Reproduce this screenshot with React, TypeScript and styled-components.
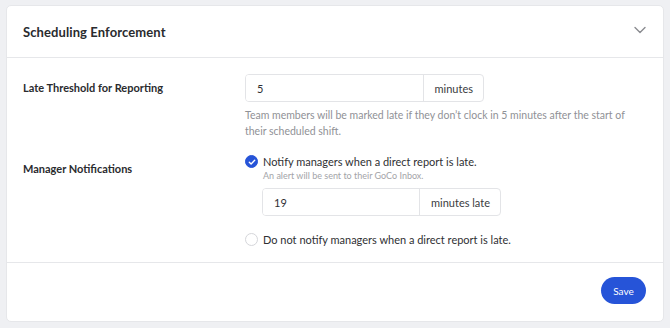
import React, { useState } from 'react';
import styled, { createGlobalStyle } from 'styled-components';

const GlobalStyle = createGlobalStyle`
  html, body {
    margin: 0;
    padding: 0;
    background: #eff0f3;
  }
  body {
    font-family: 'Lato', 'Helvetica Neue', Arial, sans-serif;
    color: #2f3033;
    -webkit-font-smoothing: antialiased;
  }
  * {
    box-sizing: border-box;
  }
`;

const Page = styled.div`
  padding: 5px 6px 6px 6px;
  width: 670px;
  height: 328px;
`;

const Card = styled.section`
  background: #fff;
  border: 1px solid #e6e7ea;
  border-radius: 5px;
  height: 317px;
  display: flex;
  flex-direction: column;
`;

const CardHeader = styled.header`
  flex: none;
  display: flex;
  align-items: center;
  justify-content: space-between;
  height: 52px;
  padding: 0 16px 0 16px;
  border-bottom: 1px solid #e6e7ea;
`;

const Title = styled.h2`
  margin: 0;
  font-size: 13px;
  font-weight: 700;
  color: #2a2b2e;
  letter-spacing: 0.1px;
`;

const Chevron = styled.svg`
  width: 14px;
  height: 14px;
  margin-top: -4px;
`;

const CardBody = styled.div`
  flex: 1;
  padding: 16px 16px 0 16px;
`;

const Row = styled.div<{ gap: number }>`
  display: grid;
  grid-template-columns: 222px 1fr;
  margin-bottom: ${(p) => p.gap}px;
`;

const Label = styled.div<{ offset: number }>`
  font-size: 11px;
  line-height: 14px;
  font-weight: 700;
  color: #2a2b2e;
  padding-top: ${(p) => p.offset}px;
`;

const Field = styled.div`
  display: flex;
  flex-direction: column;
`;

const InputGroup = styled.div<{ width: number }>`
  display: flex;
  width: ${(p) => p.width}px;
  height: 28px;
  border: 1px solid #e3e4e7;
  border-radius: 4px;
  overflow: hidden;
`;

const Input = styled.input`
  flex: 1;
  min-width: 0;
  border: none;
  outline: none;
  padding: 0 11px;
  font-family: inherit;
  font-size: 11px;
  color: #2f3033;
  background: #fff;
`;

const Addon = styled.span`
  display: flex;
  align-items: center;
  padding: 0 10px 0 11px;
  border-left: 1px solid #e3e4e7;
  font-size: 11px;
  color: #3a3b3e;
`;

const Help = styled.p`
  margin: 5px 0 0 0;
  font-size: 10.5px;
  line-height: 16px;
  color: #909196;
  max-width: 392px;
`;

const Option = styled.label`
  display: flex;
  align-items: flex-start;
  gap: 5px;
  cursor: pointer;
`;

const RadioDot = styled.span<{ checked: boolean }>`
  flex: none;
  width: 13px;
  height: 13px;
  border-radius: 50%;
  display: flex;
  align-items: center;
  justify-content: center;
  background: ${(p) => (p.checked ? '#2654d8' : '#fff')};
  border: 1px solid ${(p) => (p.checked ? '#2654d8' : '#d5d6da')};
`;

const OptionText = styled.div`
  display: flex;
  flex-direction: column;
`;

const OptionTitle = styled.span`
  font-size: 11px;
  line-height: 13px;
  color: #2f3033;
`;

const OptionSub = styled.span`
  font-size: 9px;
  line-height: 13px;
  margin-top: 1px;
  color: #a3a4a8;
`;

const Nested = styled.div`
  margin: 6px 0 0 17px;
`;

const SecondOption = styled.div`
  margin-top: 17px;
`;

const CardFooter = styled.footer`
  flex: none;
  display: flex;
  justify-content: flex-end;
  align-items: center;
  height: 59px;
  padding: 0 17px;
  border-top: 1px solid #e6e7ea;
`;

const SaveButton = styled.button`
  width: 45px;
  height: 27px;
  margin-top: -3px;
  border: none;
  border-radius: 14px;
  background: #2654d8;
  color: #fff;
  font-family: inherit;
  font-size: 10px;
  cursor: pointer;
`;

const Check: React.FC = () => (
  <svg width="8" height="8" viewBox="0 0 8 8" fill="none">
    <path d="M1.3 4.2l1.8 1.7L6.7 2.3" stroke="#fff" strokeWidth="1.4" strokeLinecap="round" strokeLinejoin="round" />
  </svg>
);

const App: React.FC = () => {
  const [notify, setNotify] = useState<boolean>(true);
  const [threshold, setThreshold] = useState<string>('5');
  const [lateMinutes, setLateMinutes] = useState<string>('19');

  const helpText = `Team members will be marked late if they don’t clock in ${threshold} minutes after the start of their scheduled shift.`;

  return (
    <>
      <GlobalStyle />
      <Page>
        <Card>
          <CardHeader>
            <Title>Scheduling Enforcement</Title>
            <Chevron viewBox="0 0 14 14" fill="none">
              <path d="M2 4.5l5 5 5-5" stroke="#8a8b90" strokeWidth="1.4" strokeLinecap="round" strokeLinejoin="round" />
            </Chevron>
          </CardHeader>

          <CardBody>
            <Row gap={16}>
              <Label offset={7}>Late Threshold for Reporting</Label>
              <Field>
                <InputGroup width={239}>
                  <Input value={threshold} onChange={(e) => setThreshold(e.target.value)} />
                  <Addon>minutes</Addon>
                </InputGroup>
                <Help>{helpText}</Help>
              </Field>
            </Row>

            <Row gap={0}>
              <Label offset={7}>Manager Notifications</Label>
              <Field>
                <Option onClick={() => setNotify(true)}>
                  <RadioDot checked={notify}>{notify && <Check />}</RadioDot>
                  <OptionText>
                    <OptionTitle>Notify managers when a direct report is late.</OptionTitle>
                    <OptionSub>An alert will be sent to their GoCo Inbox.</OptionSub>
                  </OptionText>
                </Option>
                <Nested>
                  <InputGroup width={239}>
                    <Input value={lateMinutes} onChange={(e) => setLateMinutes(e.target.value)} />
                    <Addon>minutes late</Addon>
                  </InputGroup>
                </Nested>
                <SecondOption>
                  <Option onClick={() => setNotify(false)}>
                    <RadioDot checked={!notify}>{!notify && <Check />}</RadioDot>
                    <OptionText>
                      <OptionTitle>Do not notify managers when a direct report is late.</OptionTitle>
                    </OptionText>
                  </Option>
                </SecondOption>
              </Field>
            </Row>
          </CardBody>

          <CardFooter>
            <SaveButton>Save</SaveButton>
          </CardFooter>
        </Card>
      </Page>
    </>
  );
};

export default App;
